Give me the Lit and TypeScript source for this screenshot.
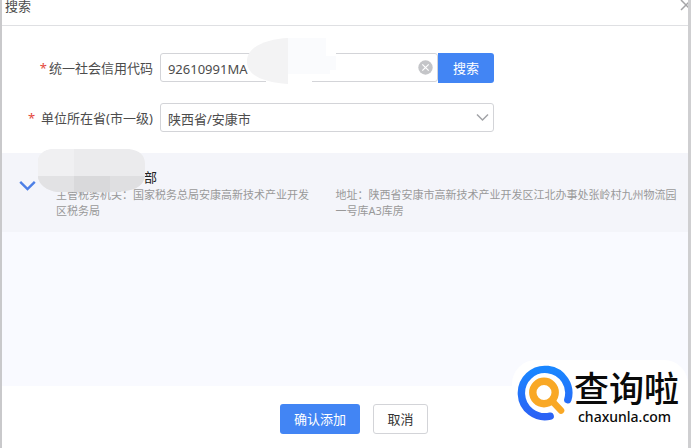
import { LitElement, html, css } from "lit";
import { customElement, state } from "lit/decorators.js";

@customElement("brand-mark")
class BrandMark extends LitElement {
  static styles = css`
    :host {
      display: flex;
      align-items: flex-start;
      gap: 1px;
      padding: 5px 9px 8px 5px;
      border-radius: 24px;
      background: #fff;
      color: #0a0a0a;
    }
    .words {
      display: flex;
      flex-direction: column;
    }
    .name {
      font: 500 35px/44px "Noto Sans CJK SC", sans-serif;
    }
    .site {
      padding-left: 4px;
      font: 500 14px/16px "Noto Sans", sans-serif;
    }
    .mark {
      flex: none;
    }
  `;

  render() {
    return html`
      <svg class="mark" width="56" height="56" viewBox="0 0 56 56" aria-hidden="true" fill="none" stroke-linecap="round">
        <defs>
          <linearGradient id="ring" x1="0" y1="0" x2="0" y2="1">
            <stop offset="0" stop-color="#1a86ff" />
            <stop offset="1" stop-color="#2b62f5" />
          </linearGradient>
        </defs>
        <path d="M50.8 34.8A23.7 23.7 0 1 0 33.2 51.2" stroke="url(#ring)" stroke-width="7.4" />
        <circle cx="27" cy="27.5" r="11.2" stroke="#f9a825" stroke-width="7.4" />
        <path d="M36 37L44 45.5" stroke="#f9a825" stroke-width="6.6" />
      </svg>
      <div class="words">
        <span class="name">查询啦</span>
        <span class="site">chaxunla.com</span>
      </div>
    `;
  }
}

@customElement("app-root")
class AppRoot extends LitElement {
  @state() private code = "92610991MA";

  static styles = css`
    :host {
      display: block;
      font: 13px/16px "Noto Sans", "Noto Sans CJK SC", sans-serif;
      color: #4c4c4c;
    }
    * {
      box-sizing: border-box;
    }
    .dialog {
      position: relative;
      display: flex;
      flex-direction: column;
      min-height: 100vh;
      border-left: 2px solid #c9c9cb;
      border-right: 3px solid #cfcfd1;
      margin-right: 1px;
      background: #fff;
      overflow: hidden;
    }
    .header {
      display: flex;
      justify-content: space-between;
      align-items: flex-start;
      height: 26px;
      border-bottom: 1px solid #dfe0e3;
      padding-left: 3px;
    }
    .title {
      margin: 0;
      font: inherit;
      line-height: 12px;
    }
    button {
      font: inherit;
      padding: 0;
      border: 0;
      background: none;
      cursor: pointer;
    }
    .close {
      display: flex;
      margin-right: -4px;
    }
    .form {
      display: grid;
      grid-template-columns: 22% minmax(0, 334px);
      column-gap: 7px;
      row-gap: 20px;
      padding: 27px 0 21px;
    }
    .label {
      align-self: center;
      text-align: right;
      white-space: nowrap;
    }
    .star {
      color: #e4483c;
      margin-right: 2px;
    }
    .wide {
      margin-right: 6px;
    }
    .search {
      display: flex;
      height: 30px;
      position: relative;
    }
    .field {
      position: relative;
      display: flex;
      flex: 1;
      min-width: 0;
      height: 29px;
    }
    input,
    select {
      width: 100%;
      height: 29px;
      margin: 0;
      padding: 2px 24px 0 7px;
      border: 1px solid #d3d4d8;
      border-radius: 3px;
      background: #fff;
      color: inherit;
      font: inherit;
      appearance: none;
      outline: none;
    }
    .clear,
    .chevron {
      position: absolute;
      display: flex;
      right: 5px;
      top: 7px;
    }
    .chevron {
      top: 10px;
      pointer-events: none;
    }
    .primary {
      border-radius: 3px;
      background: #4285f4;
      color: #fff;
    }
    .go {
      width: 56px;
      height: 30px;
      border-radius: 0 3px 3px 0;
    }
    .smudge {
      position: absolute;
      pointer-events: none;
    }
    .over-code {
      left: 86px;
      top: -17px;
    }
    .results {
      flex: 1;
      background: #f9faff;
    }
    .result {
      position: relative;
      display: grid;
      grid-template-columns: 54px 1fr;
      padding: 16px 8px 13px 0;
      background: #f4f5fa;
    }
    .tick {
      padding: 10px 0 0 17px;
    }
    .company {
      margin: 0;
      padding-left: 88px;
      font: inherit;
      color: #222;
    }
    .facts {
      display: grid;
      grid-template-columns: 256fr 344fr;
      column-gap: 23px;
      margin-top: 2px;
      font-size: 11px;
      color: #999;
    }
    .facts p {
      margin: 0;
    }
    .over-name {
      left: 35px;
      top: -5px;
    }
    .footer {
      display: flex;
      justify-content: center;
      gap: 13px;
      padding: 18px 0 14px 18px;
    }
    .confirm {
      width: 80px;
      height: 30px;
    }
    .cancel {
      width: 55px;
      height: 30px;
      border: 1px solid #d3d4d8;
      border-radius: 3px;
      background: #fff;
      color: #333;
    }
    .brand {
      position: absolute;
      right: 0;
      bottom: 15px;
    }
  `;

  private clear() {
    this.code = "";
  }

  private typed(e: Event) {
    this.code = (e.target as HTMLInputElement).value;
  }

  render() {
    return html`
      <section class="dialog">
        <header class="header">
          <h1 class="title">搜索</h1>
          <button class="close" aria-label="关闭">
            <svg width="12" height="12" viewBox="0 0 12 12" fill="none" stroke="#a5a5a8" stroke-width="1.5">
              <path d="M1 0L11 10M11 0L1 10" />
            </svg>
          </button>
        </header>
        <div class="form">
          <label class="label" for="code"><span class="star">*</span>统一社会信用代码</label>
          <div class="search">
            <div class="field">
              <input id="code" type="text" .value=${this.code} @input=${this.typed} />
              <button class="clear" aria-label="清除" @click=${this.clear}>
                <svg width="15" height="15" viewBox="0 0 15 15">
                  <circle cx="7.5" cy="7.5" r="7.2" fill="#c4c5c8" />
                  <path d="M4.3 4.3L10.7 10.7M10.7 4.3L4.3 10.7" stroke="#fff" stroke-width="1.2" />
                </svg>
              </button>
            </div>
            <button class="primary go">搜索</button>
            <svg class="smudge over-code" width="94" height="50" viewBox="0 0 94 50" aria-hidden="true">
              <path d="M42 2H90V18H94V36H66V47H20V36Z" fill="#fff" />
              <path d="M42 2H80V20H90V34H84V38H42Z" fill="#fafbfd" />
              <path d="M42 2C22 3 2 10 1 24C0 38 14 46 42 48Z" fill="#f3f3f4" />
            </svg>
          </div>
          <label class="label" for="region"><span class="star wide">*</span>单位所在省(市一级)</label>
          <div class="field">
            <select id="region">
              <option>陕西省/安康市</option>
            </select>
            <span class="chevron">
              <svg width="13" height="9" viewBox="0 0 13 9" fill="none" stroke="#a2a3a7" stroke-width="1.5">
                <path d="M1 1.5L6.5 7L12 1.5" />
              </svg>
            </span>
          </div>
        </div>
        <main class="results">
          <article class="result">
            <div class="tick">
              <svg width="17" height="12" viewBox="0 0 17 12" fill="none" stroke="#4c7fe6" stroke-width="2.4">
                <path d="M1.2 1.8L8.5 9L15.8 1.8" />
              </svg>
            </div>
            <div>
              <h2 class="company">部</h2>
              <div class="facts">
                <p>主管税务机关：国家税务总局安康高新技术产业开发区税务局</p>
                <p>地址：陕西省安康市高新技术产业开发区江北办事处张岭村九州物流园一号库A3库房</p>
              </div>
            </div>
            <svg class="smudge over-name" width="109" height="46" viewBox="0 0 109 46" aria-hidden="true">
              <clipPath id="blob">
                <path d="M16 1H92Q108 3 108 16V28Q106 41 88 43Q72 45 56 44H20Q4 41 1 30V12Q3 2 16 1Z" />
              </clipPath>
              <g clip-path="url(#blob)">
                <path d="M0 0H109V46H0Z" fill="#ebebed" />
                <path d="M0 0H37V28H0Z" fill="#f0f0f2" />
                <path d="M0 28H37V46H0Z" fill="#e2e2e4" />
                <path d="M37 28H73V46H37Z" fill="#d9d9db" />
                <path d="M73 28H109V46H73Z" fill="#dfdfe1" />
              </g>
            </svg>
          </article>
        </main>
        <footer class="footer">
          <button class="primary confirm">确认添加</button>
          <button class="cancel">取消</button>
        </footer>
        <brand-mark class="brand"></brand-mark>
      </section>
    `;
  }
}
